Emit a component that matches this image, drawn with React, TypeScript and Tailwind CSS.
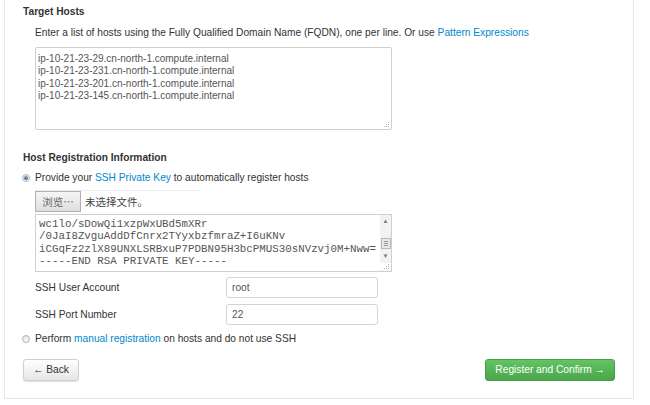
import type { ReactNode } from 'react';

const hosts = [
  'ip-10-21-23-29.cn-north-1.compute.internal',
  'ip-10-21-23-231.cn-north-1.compute.internal',
  'ip-10-21-23-201.cn-north-1.compute.internal',
  'ip-10-21-23-145.cn-north-1.compute.internal',
];

const keyLines = [
  'wc1lo/sDowQi1xzpWxUBd5mXRr',
  '/0JaI8ZvguAddDfCnrx2TYyxbzfmraZ+I6uKNv',
  'iCGqFz2zlX89UNXLSRBxuP7PDBN95H3bcPMUS30sNVzvj0M+Nww=',
  '-----END RSA PRIVATE KEY-----',
];

function Grip() {
  return (
    <svg className="absolute bottom-[1px] right-[1px]" width="7" height="7" viewBox="0 0 7 7">
      <g fill="#b5b5b5">
        <rect x="5" y="1" width="1" height="1" />
        <rect x="3" y="3" width="1" height="1" />
        <rect x="5" y="3" width="1" height="1" />
        <rect x="1" y="5" width="1" height="1" />
        <rect x="3" y="5" width="1" height="1" />
        <rect x="5" y="5" width="1" height="1" />
      </g>
    </svg>
  );
}

function Radio({ checked }: Readonly<{ checked?: boolean }>) {
  return (
    <span className="flex h-[8px] w-[8px] shrink-0 items-center justify-center rounded-full border border-[#b4b4b4] bg-gradient-to-b from-[#e4e4e4] to-[#f8f8f8]">
      {checked && <span className="h-[4px] w-[4px] rounded-full bg-gradient-to-b from-[#7f9cbd] to-[#3d6594]" />}
    </span>
  );
}

function Link({ children }: Readonly<{ children: ReactNode }>) {
  return <span className="text-[#0088cc]">{children}</span>;
}

function FieldRow({ label, value }: Readonly<{ label: string; value: string }>) {
  return (
    <div className="flex h-[21px] items-center">
      <span className="w-[221px] pl-[30px] text-[#333]">{label}</span>
      <div className="flex h-[21px] w-[152px] items-center rounded-[3px] border border-[#d4d4d4] bg-white pl-[5px] text-[#555]">
        {value}
      </div>
    </div>
  );
}

export default function App() {
  return (
    <div className="h-[405px] w-[650px] overflow-hidden bg-white font-['Liberation_Sans',Arial,sans-serif] text-[10.2px] leading-[16px] text-[#333]">
      <div className="ml-[4px] h-[399px] w-[630px] border-b border-l border-r border-[#e8e8e8]">
        <div className="pl-[18px] pt-[4px] font-bold">Target Hosts</div>
        <div className="mt-[5px] pl-[30px]">
          Enter a list of hosts using the Fully Qualified Domain Name (FQDN), one per line. Or use{' '}
          <Link>Pattern Expressions</Link>
        </div>
        <div className="relative ml-[30px] mt-[6px] h-[83px] w-[357px] rounded-[2px] border border-[#d0d0d0] px-[2px] pt-[5px] text-[10px] text-[#555]">
          {hosts.map((h) => (
            <div key={h} className="leading-[12.4px]">
              {h}
            </div>
          ))}
          <Grip />
        </div>

        <div className="mt-[20px] pl-[18px] font-bold">Host Registration Information</div>
        <div className="mt-[4px] flex items-center gap-[5px] pl-[17px]">
          <Radio checked />
          <span>
            Provide your <Link>SSH Private Key</Link> to automatically register hosts
          </span>
        </div>
        <div className="ml-[30px] mt-[4px] flex h-[22px] w-[166px] items-center border-t border-[#ececec] font-['Noto_Sans_CJK_SC',sans-serif]">
          <div className="flex h-[21px] w-[46px] items-center justify-center border border-[#b0b0b0] bg-gradient-to-b from-[#f6f6f6] to-[#dedede] text-[10.5px] text-[#666]">
            浏览…
          </div>
          <span className="ml-[4px] text-[10.5px] text-[#444]">未选择文件。</span>
        </div>
        <div className="relative ml-[30px] mt-[2px] flex h-[58px] w-[357px] border border-[#d0d0d0]">
          <div className="flex-1 overflow-hidden pl-[3px] pt-[3px] font-['Liberation_Mono',monospace] text-[10.8px] leading-[12.4px] whitespace-nowrap text-[#555]">
            {keyLines.map((l) => (
              <div key={l}>{l}</div>
            ))}
          </div>
          <div className="flex w-[11px] flex-col items-center bg-[#f2f2f2]">
            <span className="mt-[2px] text-[6px] leading-[8px] text-[#777]">▲</span>
            <span className="mt-[13px] flex h-[11px] w-[10px] flex-col justify-center gap-[1px] border border-[#b8b8b8] bg-[#e6e6e6] px-[2px]">
              <span className="h-px bg-[#9a9a9a]" />
              <span className="h-px bg-[#9a9a9a]" />
              <span className="h-px bg-[#9a9a9a]" />
            </span>
            <span className="mt-[3px] text-[6px] leading-[8px] text-[#777]">▼</span>
            <span className="flex-1" />
            <span className="mb-[1px] h-[7px] w-full bg-white" />
          </div>
          <Grip />
        </div>

        <div className="mt-[5px] flex flex-col gap-[6px]">
          <FieldRow label="SSH User Account" value="root" />
          <FieldRow label="SSH Port Number" value="22" />
        </div>

        <div className="mt-[6px] flex items-center gap-[5px] pl-[17px]">
          <Radio />
          <span>
            Perform <Link>manual registration</Link> on hosts and do not use SSH
          </span>
        </div>

        <div className="mt-[12px] flex items-center justify-between pl-[18px] pr-[18px]">
          <button className="flex h-[22px] w-[56px] items-center justify-center rounded-[3px] border border-[#cfcfcf] bg-gradient-to-b from-white to-[#e6e6e6] text-[#333] shadow-[0_1px_1px_rgba(0,0,0,0.12)]">
            ← Back
          </button>
          <button className="flex h-[22px] w-[130px] items-center justify-center rounded-[3px] border border-[#4a9c4a] bg-gradient-to-b from-[#62c462] to-[#4aa54a] text-white">
            Register and Confirm →
          </button>
        </div>
      </div>
    </div>
  );
}
